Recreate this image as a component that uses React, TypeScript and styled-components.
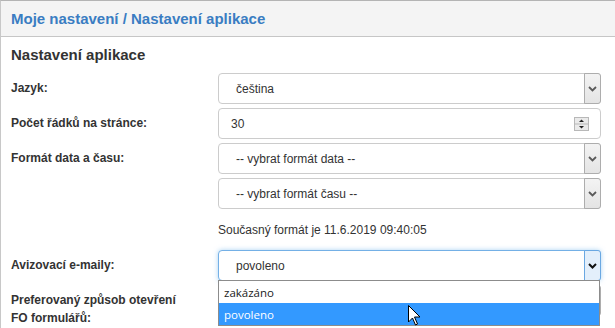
import styled, { createGlobalStyle, css } from 'styled-components'

const GlobalStyle = createGlobalStyle`
  html, body {
    margin: 0;
    padding: 0;
    background: #fff;
    overflow: hidden;
  }
  body {
    font-family: 'Liberation Sans', Arial, sans-serif;
    font-size: 12px;
    color: #333;
  }
`

const Panel = styled.div`
  border-left: 1px solid #c8c8c8;
  border-top: 1px solid #b4b4b4;
  background: #fff;
  height: 328px;
  box-sizing: border-box;
`

const PanelHeading = styled.div`
  height: 35px;
  display: flex;
  align-items: center;
  padding: 0 10px;
  background: #f4f4f4;
  border-bottom: 1px solid #c6c6c6;
  color: #3a7dc2;
  font-weight: bold;
  font-size: 15px;
`

const PanelBody = styled.div`
  padding: 9px 14px 0 10px;
`

const SectionTitle = styled.div`
  font-size: 15px;
  font-weight: bold;
  line-height: 18px;
  color: #333;
  margin-bottom: 9px;
`

const Form = styled.div`
  display: grid;
  grid-template-columns: 207px 1fr;
  row-gap: 4px;
`

const Label = styled.div`
  font-weight: bold;
  font-size: 12px;
  line-height: 18px;
  padding-top: 6px;
  color: #333;
`

const Field = styled.div<{ $focused?: boolean; $input?: boolean }>`
  position: relative;
  height: 31px;
  box-sizing: border-box;
  display: flex;
  align-items: center;
  border: 1px solid #ccc;
  border-radius: 4px;
  padding-left: ${(p) => (p.$input ? '12px' : '17px')};
  padding-right: ${(p) => (p.$input ? '11px' : '0')};
  color: #333;
  font-size: 12px;
  background: #fff;
  ${(p) =>
    p.$focused &&
    css`
      border-color: #74b0e6;
      box-shadow: 0 0 5px rgba(102, 175, 233, 0.55);
    `}
`

const Value = styled.span`
  flex: 1;
`

const ArrowBox = styled.div<{ $focused?: boolean }>`
  align-self: stretch;
  width: 15px;
  margin: -1px -1px -1px 0;
  border: 1px solid ${(p) => (p.$focused ? '#6aa8e2' : '#adadad')};
  border-radius: 0 3px 3px 0;
  background: ${(p) =>
    p.$focused ? '#e3effb' : 'linear-gradient(#f3f3f3, #e4e4e4)'};
  display: flex;
  align-items: center;
  justify-content: center;
`

const Note = styled.div`
  grid-column: 2;
  height: 33px;
  display: flex;
  align-items: center;
  font-size: 12px;
  color: #333;
`

const Cell = styled.div<{ $second?: boolean }>`
  position: relative;
  grid-column: ${(p) => (p.$second ? 2 : 'auto')};
`

const Options = styled.div`
  position: absolute;
  top: 30px;
  left: 0;
  right: 1px;
  z-index: 5;
  background: #fff;
  border: 1px solid #8c8c8c;
  font-family: 'Open Sans', 'Liberation Sans', sans-serif;
  font-size: 11.5px;
`

const Option = styled.div<{ $active?: boolean }>`
  height: 22px;
  display: flex;
  align-items: center;
  padding-left: 5px;
  color: ${(p) => (p.$active ? '#fff' : '#222')};
  background: ${(p) => (p.$active ? '#3399ff' : '#fff')};
`

const Cursor = styled.svg`
  position: absolute;
  left: 189px;
  top: 24px;
`

const Chevron = ({ dark }: { dark?: boolean }) => (
  <svg width="9" height="6" viewBox="0 0 9 6">
    <path
      d="M1 1 L4.5 4.5 L8 1"
      fill="none"
      stroke={dark ? '#111' : '#5a5a5a'}
      strokeWidth={dark ? 2 : 1.8}
    />
  </svg>
)

const Spinner = () => (
  <svg width="15" height="14" viewBox="0 0 15 14">
    <rect x="0.5" y="0.5" width="14" height="13" fill="#eaeaea" stroke="#b8b8b8" />
    <line x1="1" y1="7" x2="14" y2="7" stroke="#b8b8b8" />
    <path d="M5 5 L7.5 2.5 L10 5 Z" fill="#222" />
    <path d="M5 9 L10 9 L7.5 11.5 Z" fill="#222" />
  </svg>
)

const Select = ({ value, focused }: { value: string; focused?: boolean }) => (
  <Field $focused={focused}>
    <Value>{value}</Value>
    <ArrowBox $focused={focused}>
      <Chevron dark={focused} />
    </ArrowBox>
  </Field>
)

export default function App() {
  return (
    <>
      <GlobalStyle />
      <Panel>
        <PanelHeading>Moje nastavení / Nastavení aplikace</PanelHeading>
        <PanelBody>
          <SectionTitle>Nastavení aplikace</SectionTitle>
          <Form>
            <Label>Jazyk:</Label>
            <Select value="čeština" />

            <Label>Počet řádků na stránce:</Label>
            <Field $input>
              <Value>30</Value>
              <Spinner />
            </Field>

            <Label>Formát data a času:</Label>
            <Select value="-- vybrat formát data --" />
            <Cell $second>
              <Select value="-- vybrat formát času --" />
            </Cell>

            <Note>Současný formát je 11.6.2019 09:40:05</Note>

            <Label>Avizovací e-maily:</Label>
            <Cell>
              <Select value="povoleno" focused />
              <Options>
                <Option>zakázáno</Option>
                <Option $active>povoleno</Option>
                <Cursor width="13" height="21" viewBox="0 0 13 21">
                  <path
                    d="M0.5 0.5 L0.5 17 L4.5 13 L7.5 20 L9.5 19 L6.5 12 L12 12 Z"
                    fill="#fff"
                    stroke="#000"
                    strokeWidth="1"
                  />
                </Cursor>
              </Options>
            </Cell>

            <Label>
              Preferovaný způsob otevření
              <br />
              FO formulářů:
            </Label>
            <Select value="" />
          </Form>
        </PanelBody>
      </Panel>
    </>
  )
}
